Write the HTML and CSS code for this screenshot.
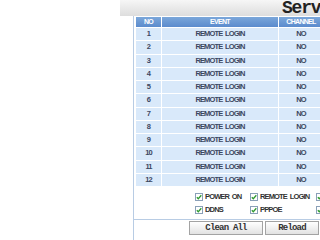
FILE: index.html
```html
<!DOCTYPE html>
<html lang="en">
<head>
    <meta charset="UTF-8">
    <meta name="viewport" content="width=device-width, initial-scale=1.0">
    <title>Server Log</title>
    <link rel="stylesheet" href="styles.css">
</head>
<body>
    <div class="page">
        <div class="log-panel">
            <div class="log-title">Server Log</div>

            <!-- event list -->
            <div class="log-table">
                <div class="th">NO</div><div class="th">EVENT</div><div class="th">CHANNEL</div>
                <div class="td">1</div><div class="td">REMOTE LOGIN</div><div class="td">NO</div>
                <div class="td">2</div><div class="td">REMOTE LOGIN</div><div class="td">NO</div>
                <div class="td">3</div><div class="td">REMOTE LOGIN</div><div class="td">NO</div>
                <div class="td">4</div><div class="td">REMOTE LOGIN</div><div class="td">NO</div>
                <div class="td">5</div><div class="td">REMOTE LOGIN</div><div class="td">NO</div>
                <div class="td">6</div><div class="td">REMOTE LOGIN</div><div class="td">NO</div>
                <div class="td">7</div><div class="td">REMOTE LOGIN</div><div class="td">NO</div>
                <div class="td">8</div><div class="td">REMOTE LOGIN</div><div class="td">NO</div>
                <div class="td">9</div><div class="td">REMOTE LOGIN</div><div class="td">NO</div>
                <div class="td">10</div><div class="td">REMOTE LOGIN</div><div class="td">NO</div>
                <div class="td">11</div><div class="td">REMOTE LOGIN</div><div class="td">NO</div>
                <div class="td">12</div><div class="td">REMOTE LOGIN</div><div class="td">NO</div>
            </div>

            <!-- filters -->
            <div class="log-filters">
                <label class="filter"><svg class="check" viewBox="0 0 8 8"><rect x="0.5" y="0.5" width="7" height="7" fill="#fff" stroke="#8aa0b8"/><path d="M1.8 4.2 L3.3 5.7 L6.3 2.3" fill="none" stroke="#2f9a2f" stroke-width="1.3"/></svg>POWER ON</label>
                <label class="filter"><svg class="check" viewBox="0 0 8 8"><rect x="0.5" y="0.5" width="7" height="7" fill="#fff" stroke="#8aa0b8"/><path d="M1.8 4.2 L3.3 5.7 L6.3 2.3" fill="none" stroke="#2f9a2f" stroke-width="1.3"/></svg>REMOTE LOGIN</label>
                <label class="filter"><svg class="check" viewBox="0 0 8 8"><rect x="0.5" y="0.5" width="7" height="7" fill="#fff" stroke="#8aa0b8"/><path d="M1.8 4.2 L3.3 5.7 L6.3 2.3" fill="none" stroke="#2f9a2f" stroke-width="1.3"/></svg>ALARM</label>
                <label class="filter"><svg class="check" viewBox="0 0 8 8"><rect x="0.5" y="0.5" width="7" height="7" fill="#fff" stroke="#8aa0b8"/><path d="M1.8 4.2 L3.3 5.7 L6.3 2.3" fill="none" stroke="#2f9a2f" stroke-width="1.3"/></svg>DDNS</label>
                <label class="filter"><svg class="check" viewBox="0 0 8 8"><rect x="0.5" y="0.5" width="7" height="7" fill="#fff" stroke="#8aa0b8"/><path d="M1.8 4.2 L3.3 5.7 L6.3 2.3" fill="none" stroke="#2f9a2f" stroke-width="1.3"/></svg>PPPOE</label>
                <label class="filter"><svg class="check" viewBox="0 0 8 8"><rect x="0.5" y="0.5" width="7" height="7" fill="#fff" stroke="#8aa0b8"/><path d="M1.8 4.2 L3.3 5.7 L6.3 2.3" fill="none" stroke="#2f9a2f" stroke-width="1.3"/></svg>HDD</label>
            </div>

            <div class="log-actions">
                <button class="btn btn-clean">Clean All</button>
                <button class="btn btn-reload">Reload</button>
            </div>
        </div>
    </div>
</body>
</html>
```

FILE: styles.css
```css
body {
    margin: 0;
    width: 320px;
    height: 240px;
    overflow: hidden;
    background: #fff;
}
.page {
    width: 480px;
    padding-left: 133px;
}
.log-panel {
    width: 320px;
    border-left: 1px solid #b8cce4;
    font-family: "Liberation Sans", Arial, sans-serif;
    font-weight: bold;
}
.log-title {
    height: 16px;
    margin-left: -14px;
    padding-left: 162px;
    background: linear-gradient(#f6f6f6, #dddddd);
    font: bold 18px/16px "Liberation Mono", monospace;
    letter-spacing: -1.2px;
    color: #222;
    overflow: hidden;
}
.log-table {
    display: grid;
    grid-template-columns: 25px 116px 44px;
    grid-template-rows: 10px repeat(12, 12.25px);
    gap: 1px;
    margin: 1px 0 0 2px;
    text-align: center;
}
.th {
    background: linear-gradient(#7ba7da, #5b8bcd);
    color: #fff;
    font-size: 7px;
    line-height: 10px;
    letter-spacing: -0.7px;
    overflow: hidden;
}
.td {
    background: #d9e9fa;
    color: #3d4761;
    font-size: 7.5px;
    line-height: 12.5px;
    letter-spacing: -0.85px;
    word-spacing: 1.5px;
}
.log-filters {
    display: grid;
    grid-template-columns: 55px 66px 60px;
    grid-auto-rows: 13px;
    padding: 3px 0 3px 61px;
    margin-top: 1px;
    border-bottom: 1px solid #b8cce4;
}
.filter {
    display: flex;
    align-items: center;
    gap: 2px;
    font-size: 7.5px;
    letter-spacing: -0.85px;
    word-spacing: 1.5px;
    color: #333;
    white-space: nowrap;
}
.check {
    width: 8px;
    height: 8px;
    flex-shrink: 0;
}
.log-actions {
    display: flex;
    gap: 2px;
    padding: 1px 0 5px 55px;
    border-bottom: 1px solid #b8cce4;
}
.btn {
    height: 14px;
    padding: 0;
    border: 1px solid #a3a3a3;
    border-radius: 0;
    background: linear-gradient(#ffffff, #e2e2e2);
    font: bold 9px "Liberation Mono", monospace;
    letter-spacing: -0.8px;
    color: #333;
}
.btn-clean {
    width: 74px;
}
.btn-reload {
    width: 54px;
}
```
